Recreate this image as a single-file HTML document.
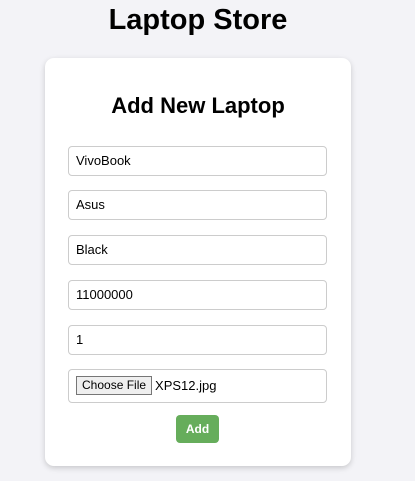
<!DOCTYPE html>
<html><head><style>
body{margin:0;background:#f3f3f7;font-family:"Liberation Sans",Arial,sans-serif;width:415px;height:481px;position:relative;overflow:hidden}
h1{position:absolute;left:0;width:396px;top:4px;margin:0;text-align:center;font-size:29px;font-weight:bold;color:#000}
.card{position:absolute;left:45px;top:58px;width:306px;height:408px;background:#fff;border-radius:9px;box-shadow:0 2px 6px rgba(0,0,0,.18)}
h2{position:absolute;left:0;width:306px;top:35px;margin:0;text-align:center;font-size:22px;font-weight:bold}
.in{position:absolute;left:23px;width:250px;height:28px;border:1px solid #ccc;border-radius:4px;font-size:13px;line-height:28px;padding-left:7px;box-sizing:content-box}
.file{height:32px;line-height:32px}
.cf{display:inline-block;border:1px solid #767676;background:#efefef;height:17px;line-height:17px;padding:0 5px;font-size:12px;vertical-align:middle;margin-right:3px;margin-top:-3px}
.btn{position:absolute;left:131px;top:357px;width:43px;height:28px;background:#66ad5b;border-radius:4px;color:#fff;font-size:12px;font-weight:bold;text-align:center;line-height:28px}
</style></head><body>
<h1>Laptop Store</h1>
<div class="card">
<h2>Add New Laptop</h2>
<div class="in" style="top:88px">VivoBook</div>
<div class="in" style="top:132px">Asus</div>
<div class="in" style="top:177px">Black</div>
<div class="in" style="top:222px">11000000</div>
<div class="in" style="top:267px">1</div>
<div class="in file" style="top:311px"><span class="cf">Choose File</span>XPS12.jpg</div>
<div class="btn">Add</div>
</div>
</body></html>
